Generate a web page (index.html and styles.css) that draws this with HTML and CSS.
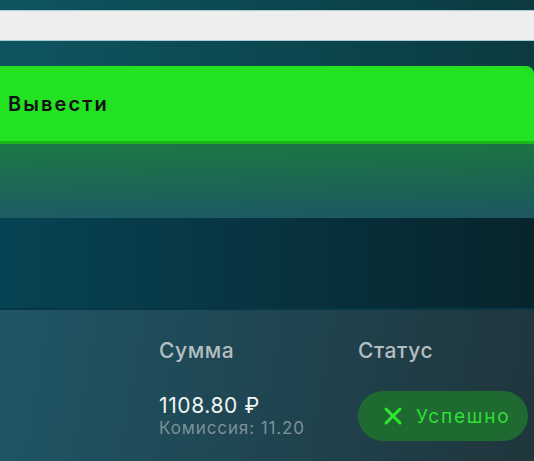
FILE: index.html
```html
<!DOCTYPE html>
<html lang="ru">
<head>
    <meta charset="UTF-8">
    <meta name="viewport" content="width=device-width, initial-scale=1.0">
    <title>Вывод средств</title>
    <link rel="stylesheet" href="styles.css">
</head>
<body>
    <div class="withdraw">
        <div class="field">
            <input type="text" class="amount-input">
        </div>

        <button class="withdraw-btn">Вывести</button>

        <div class="glow"></div>
        <div class="info-panel"></div>

        <div class="history">
            <div class="history-row head">
                <div></div>
                <div class="col-title">Сумма</div>
                <div class="col-title">Статус</div>
            </div>
            <div class="history-row">
                <div></div>
                <div class="sum">
                    <div class="sum-value">1108.80 ₽</div>
                    <div class="sum-fee">Комиссия: 11.20</div>
                </div>
                <div>
                    <span class="status">
                        <svg class="status-icon" viewBox="0 0 20 20" width="20" height="20">
                            <path d="M3 3 L17 17 M17 3 L3 17" stroke="#2fe82f" stroke-width="3" stroke-linecap="round" fill="none"/>
                        </svg>
                        Успешно
                    </span>
                </div>
            </div>
        </div>
    </div>
</body>
</html>
```
FILE: styles.css
```css
body {
    margin: 0;
    font-family: 'Inter', 'Noto Sans', sans-serif;
    background: linear-gradient(to right, #0e5560, #0b3a40);
    height: 461px;
    overflow: hidden;
}

.field {
    padding-top: 10px;
}

.amount-input {
    display: block;
    width: 100%;
    height: 31px;
    margin: 0;
    padding: 0 10px;
    background: #eeeeee;
    border: none;
    border-top: 1px solid #a9cbd3;
    border-bottom: 1px solid #a9cbd3;
    box-sizing: border-box;
    outline: none;
}

.withdraw-btn {
    display: block;
    width: 100%;
    height: 78px;
    margin-top: 25px;
    padding: 0 8px;
    background: #22e222;
    border: none;
    border-bottom: 3px solid #1bb81e;
    border-radius: 0 8px 0 0;
    color: #111;
    font-family: inherit;
    font-size: 20px;
    font-weight: 600;
    letter-spacing: 2.1px;
    text-align: left;
}

.glow {
    height: 74px;
    background: linear-gradient(to bottom, rgba(27, 122, 66, 0.9), rgba(30, 90, 102, 0.85)),
                linear-gradient(to right, #1e6a5a, #14403c);
}

.info-panel {
    height: 92px;
    background: linear-gradient(to right, #074354, #07242b);
    border-bottom: 2px solid #073644;
    box-sizing: border-box;
}

.history {
    height: 151px;
    background: linear-gradient(100deg, #1f5666 0%, #1f4a57 35%, #20353c 100%);
    padding-top: 28px;
    box-sizing: border-box;
}

.history-row {
    display: grid;
    grid-template-columns: 159px 199px 1fr;
}

.col-title {
    color: #b4bec2;
    font-size: 21px;
    font-weight: 500;
    letter-spacing: 0.6px;
}

.history-row.head {
    margin-bottom: 24px;
}

.sum-value {
    color: #f2f4f5;
    font-size: 21px;
    font-weight: 400;
    letter-spacing: 0.6px;
    margin-top: 6px;
}

.sum-fee {
    color: #7d9198;
    font-size: 17px;
    letter-spacing: 0.9px;
}

.status {
    display: inline-flex;
    align-items: center;
    gap: 13px;
    width: 170px;
    height: 50px;
    margin-top: 4px;
    padding-left: 25px;
    box-sizing: border-box;
    background: #1f6a31;
    border-radius: 25px;
    color: #2fdf34;
    font-size: 19px;
    letter-spacing: 1.8px;
}

.status-icon {
    flex: none;
}
```
